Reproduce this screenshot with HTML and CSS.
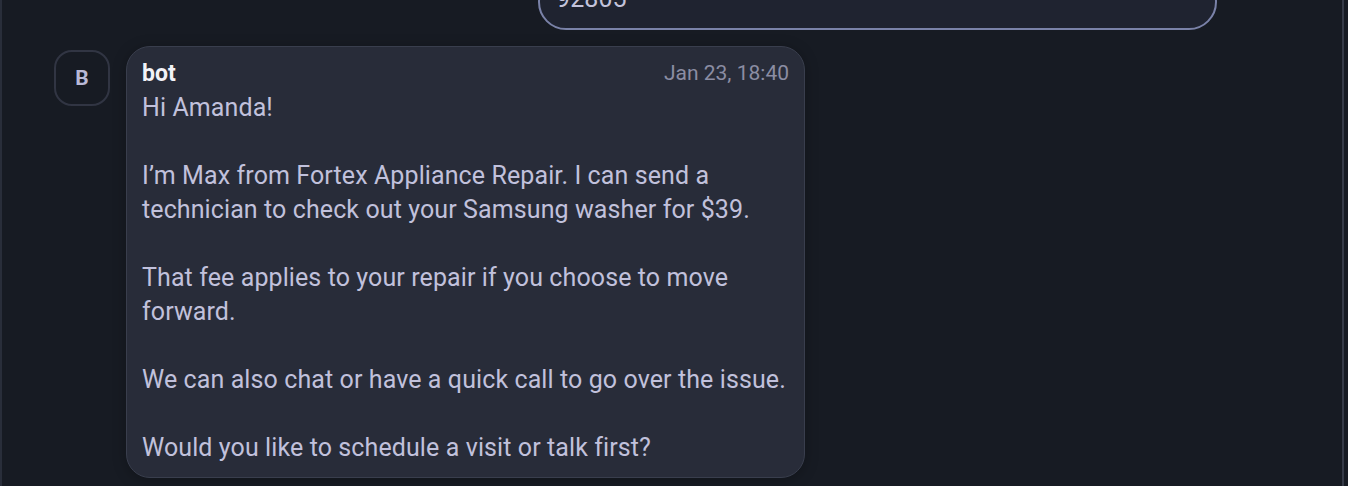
FILE: index.html
```html
<!DOCTYPE html>
<html lang="en">
<head>
<meta charset="utf-8">
<title>Chat</title>
<link rel="stylesheet" href="styles.css">
</head>
<body>
<div class="panel">
  <div class="messages">
    <div class="row row-user">
      <div class="bubble-user">92805</div>
    </div>
    <div class="row row-bot">
      <div class="avatar">B</div>
      <div class="bubble-bot">
        <div class="bubble-head">
          <span class="author">bot</span>
          <span class="time">Jan 23, 18:40</span>
        </div>
        <div class="bubble-text">Hi Amanda!

I’m Max from Fortex Appliance Repair. I can send a technician to check out your Samsung washer for $39.

That fee applies to your repair if you choose to move forward.

We can also chat or have a quick call to go over the issue.

Would you like to schedule a visit or talk first?</div>
      </div>
    </div>
  </div>
</div>
</body>
</html>
```
FILE: styles.css
```css
html, body {
  margin: 0;
  padding: 0;
  height: 100%;
  background: #171b23;
  overflow: hidden;
}
body {
  font-family: Roboto, "Liberation Sans", sans-serif;
}
.panel {
  width: 1340px;
  height: 486px;
  border-left: 2px solid #292e3a;
  border-right: 2px solid #363b48;
  overflow: hidden;
}
.messages {
  display: flex;
  flex-direction: column;
}
.row-user {
  display: flex;
  padding-left: 536px;
  margin-top: -26px;
}
.bubble-user {
  width: 679px;
  height: 56px;
  box-sizing: border-box;
  padding: 6px 16px 0 16px;
  background: #1f2330;
  border: 2px solid #7a82a8;
  border-radius: 32px;
  color: #c3c3db;
  font-size: 25px;
  line-height: 34px;
  letter-spacing: 0.1px;
}
.row-bot {
  display: flex;
  align-items: flex-start;
  margin-top: 16px;
  padding-left: 52px;
  gap: 16px;
}
.avatar {
  width: 56px;
  height: 56px;
  box-sizing: border-box;
  margin-top: 4px;
  border: 2px solid #313543;
  border-radius: 18px;
  display: flex;
  align-items: center;
  justify-content: center;
  color: #b9b9d6;
  font-weight: 700;
  font-size: 21px;
}
.bubble-bot {
  width: 679px;
  box-sizing: border-box;
  padding: 12px 15px 12px 15px;
  background: #282c39;
  border: 1px solid #393e4d;
  border-radius: 24px;
  box-shadow: 0 2px 14px rgba(0, 0, 0, 0.25);
}
.bubble-head {
  display: flex;
  justify-content: space-between;
  align-items: center;
  height: 28px;
  margin-bottom: 4px;
}
.author {
  color: #f2f2f7;
  font-weight: 700;
  font-size: 23px;
}
.time {
  color: #8b8da3;
  font-size: 21px;
}
.bubble-text {
  white-space: pre-line;
  color: #c1c1dc;
  font-size: 25px;
  line-height: 34px;
  letter-spacing: 0.1px;
}
```
